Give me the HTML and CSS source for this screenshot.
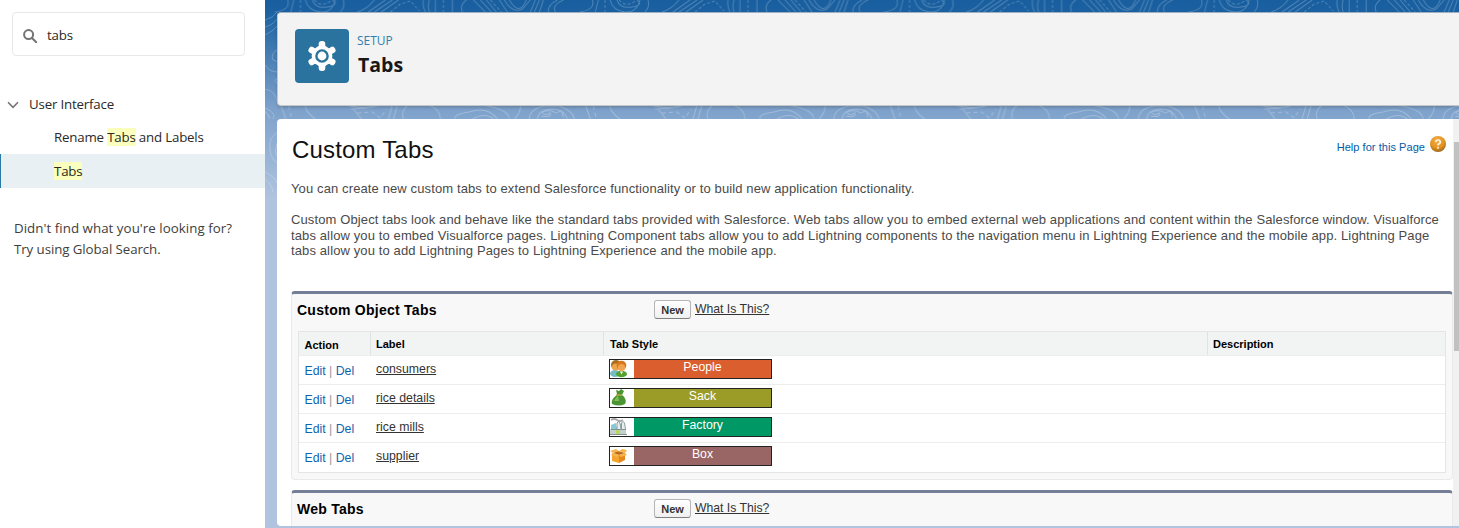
FILE: index.html
```html
<!DOCTYPE html>
<html lang="en">
<head>
<meta charset="utf-8">
<title>Tabs | Setup</title>
<link rel="stylesheet" href="styles.css">
</head>
<body>
<div class="app">
  <aside class="sidebar">
    <div class="search">
      <svg class="search-icon" viewBox="0 0 14 14"><circle cx="5.6" cy="5.6" r="4.5"/><path d="M9 9l4.2 4.2"/></svg>
      <span class="search-text">tabs</span>
    </div>
    <nav class="tree">
      <div class="node"><svg class="chevron" viewBox="0 0 12 8"><path d="M1.5 1.7l4.5 4.6 4.5-4.6"/></svg><span>User Interface</span></div>
      <div class="leaf"><span>Rename <mark>Tabs</mark> and Labels</span></div>
      <div class="leaf active"><span><mark>Tabs</mark></span></div>
    </nav>
    <p class="hint">Didn't find what you're looking for?<br><span class="hint-action">Try using Global Search.</span></p>
  </aside>
  <main class="main">
    <svg class="contours" width="1194" height="528">
      <defs>
        <pattern id="topo" x="335" y="0" width="304.6" height="528" patternUnits="userSpaceOnUse">
          <g fill="none" stroke="#fff" stroke-opacity=".22">
            <path d="M10 0Q13 11 25 12T40 0M17 0Q20 9 32 7T37 0M48 0Q50 7 45 12M62 12Q72 9 79 0M73 12L90 0M79 12L97 0M86 12L103 0M128 0Q127 7 130 12M134 0Q132 6 134 12M140 0V12M157 0V12M167 12Q164 5 171 0M178 0L190 12M185 0L196 12M191 0L201 12M204 0L212 12M209 0Q217 14 227 9L235 0M214 0Q224 17 231 0M240 0L235 12M244 0L239 12M248 0L244 12M253 12Q252 5 262 0M260 12Q256 5 268 0M284 12Q300 10 297 0M303 0L300 12"/>
            <path stroke-dasharray="3 2" d="M95 12L105 4L115 1L124 11M148 0V12M19 0Q26 8 35 1M195 0L206 12M5 0V12"/>
          </g>
          <g fill="none" stroke="#fff" stroke-opacity=".25">
            <path d="M10 105Q9 111 20 119M49 105Q70 110 85 105M55 109Q76 108 80 106M58 109L66 119M97 105L93 119M102 105L98 119M108 119Q105 111 113 105M133 105Q145 109 145 119M160 119Q158 114 174 112Q192 106 202 119M177 119Q190 112 198 119M184 105Q213 108 214 119M225 105Q226 112 219 119M234 119Q234 109 249 106H264Q278 111 279 119M242 119Q243 110 256 109Q269 109 272 119M246 116Q256 118 255 113L250 115L246 112Q257 109 260 113L266 111L268 117M290 105L295 119"/>
            <path stroke-dasharray="4 3" d="M62 113L77 112L85 118L91 109M298 106L301 119"/>
          </g>
        </pattern>
      </defs>
      <rect width="1194" height="119" fill="url(#topo)"/>
      <g fill="none" stroke="#fff" stroke-opacity=".22"><path d="M0 20Q8 18 12 12M0 27Q8 25 13 18M0 35Q9 31 13 25M0 65Q4 72 13 72M13 49Q5 54 8 60L13 62M0 89Q12 91 13 105M13 78Q7 80 13 84M0 108Q12 113 8 119M13 132Q3 138 5 149Q5 158 13 164M13 141Q8 152 13 158M0 172Q8 175 12 183M0 179Q7 184 8 192"/></g>
    </svg>
    <header class="page-header">
      <div class="gear-box">
        <svg viewBox="0 0 54 54">
          <g fill="#fff"><circle cx="27" cy="27" r="10.4"/><rect x="23.7" y="12" width="6.6" height="30" rx="3"/><rect x="23.7" y="12" width="6.6" height="30" rx="3" transform="rotate(60 27 27)"/><rect x="23.7" y="12" width="6.6" height="30" rx="3" transform="rotate(120 27 27)"/></g>
          <circle cx="27" cy="27" r="5.6" fill="#fff" stroke="#2a739e" stroke-width="2.4"/>
        </svg>
      </div>
      <div class="titles"><span class="setup">SETUP</span><h1>Tabs</h1></div>
    </header>
    <section class="content">
      <div class="scroll-body">
        <div class="title-row">
          <h2>Custom Tabs</h2>
          <a class="help">Help for this Page
            <svg viewBox="0 0 16 16"><defs><radialGradient id="orb" cx=".45" cy=".3" r=".75"><stop offset="0" stop-color="#f2b04e"/><stop offset=".6" stop-color="#e3921f"/><stop offset="1" stop-color="#8f601b"/></radialGradient></defs><circle cx="8" cy="8" r="8" fill="url(#orb)"/><path d="M5.7 6.2Q5.9 4 8 4T10.3 6Q10.3 7.1 9.1 7.8T8 9.5" fill="none" stroke="#fff3dc" stroke-width="1.7"/><circle cx="8" cy="11.7" r="1" fill="#fff3dc"/></svg>
          </a>
        </div>
        <p class="intro">You can create new custom tabs to extend Salesforce functionality or to build new application functionality.</p>
        <p class="intro second">Custom Object tabs look and behave like the standard tabs provided with Salesforce. Web tabs allow you to embed external web applications and content within the Salesforce window. Visualforce<br>tabs allow you to embed Visualforce pages. Lightning Component tabs allow you to add Lightning components to the navigation menu in Lightning Experience and the mobile app. Lightning Page<br>tabs allow you to add Lightning Pages to Lightning Experience and the mobile app.</p>
        <div class="block">
          <div class="block-head"><h3>Custom Object Tabs</h3><button class="new">New</button><a class="what">What Is This?</a></div>
          <div class="table">
            <div class="row head"><div class="action">Action</div><div>Label</div><div>Tab Style</div><div>Description</div></div>
            <div class="row"><div class="action"><a>Edit</a> | <a>Del</a></div><div><a class="name">consumers</a></div><div class="style-cell"><div class="swatch people"><svg viewBox="0 0 24 18"><ellipse cx="5" cy="13.5" rx="5" ry="3.5" fill="#72bdc5"/><circle cx="6" cy="5" r="5" fill="#a96d20"/><circle cx="5.5" cy="7" r="3.5" fill="#eca54a"/><ellipse cx="11.5" cy="14" rx="5.5" ry="3.2" fill="#57a22f"/><circle cx="11.5" cy="5.5" r="4.8" fill="#d9771c"/><circle cx="11.5" cy="7.5" r="3.6" fill="#f1a34e"/><path d="M10 11.5l1.5 3 1.5-3" fill="#fff"/></svg><span>People</span></div></div><div></div></div>
            <div class="row"><div class="action"><a>Edit</a> | <a>Del</a></div><div><a class="name">rice details</a></div><div class="style-cell"><div class="swatch sack"><svg viewBox="0 0 24 18"><path d="M7 5L6 1L9 2L11 0L14 2L12 6C15 8 17 12 15 15Q9 18 2 15C1 11 4 8 7 6Z" fill="#4b9632"/><path d="M4 12Q6 8 8 7L9 12Z" fill="#82bd59"/><path d="M6 6H12" stroke="#b5a94a" stroke-width="1.5"/></svg><span>Sack</span></div></div><div></div></div>
            <div class="row"><div class="action"><a>Edit</a> | <a>Del</a></div><div><a class="name">rice mills</a></div><div class="style-cell"><div class="swatch factory"><svg viewBox="0 0 24 18"><path d="M1 2Q4 0 7 2T13 2" fill="none" stroke="#aaa" stroke-width="1.8"/><path d="M1 7L6 5V9L11 6V11H16V14H1Z" fill="#88c9d5"/><path d="M7 11V5Q8 2 10 5L11 11M11.5 11V5Q13 2 14.5 5L15.5 11" fill="#e7eeee" stroke="#8d9a9e"/><path d="M0 11H16V17H0Z" fill="#c4cfd0"/><path d="M0 16.5H17M1 11.5H16" stroke="#879296"/><path d="M6 12h4v4H6z" fill="#b9d95c"/></svg><span>Factory</span></div></div><div></div></div>
            <div class="row"><div class="action"><a>Edit</a> | <a>Del</a></div><div><a class="name">supplier</a></div><div class="style-cell"><div class="swatch box"><svg viewBox="0 0 24 18"><path d="M2 6L9 8V16L2 14Z" fill="#f4a52f"/><path d="M9 8L15 6V13L9 16Z" fill="#e6861c"/><path d="M3 6L8 4L15 6L9 8Z" fill="#b86e1b"/><path d="M3 6L0 4L6 2L9 4ZM15 6L17 3L12 2L9 4ZM3 6L1 8L7 10L9 8ZM15 6L17 8L11 10L9 8Z" fill="#f8b44c"/></svg><span>Box</span></div></div><div></div></div>
          </div>
        </div>
        <div class="block next">
          <div class="block-head"><h3>Web Tabs</h3><button class="new">New</button><a class="what">What Is This?</a></div>
        </div>
      </div>
      <div class="scrollbar"><div class="thumb"></div></div>
    </section>
  </main>
</div>
</body>
</html>
```
FILE: styles.css
```css
* { box-sizing: border-box; }
body { margin: 0; background: #fff; font-family: "Liberation Sans", Arial, sans-serif; overflow: hidden; }
h1, h2, h3, p { margin: 0; }
.app { display: flex; width: 1459px; height: 528px; overflow: hidden; }

.sidebar { width: 265px; flex: none; background: #fff; padding-top: 12px; font-family: "Open Sans", "Noto Sans", sans-serif; font-size: 13.3px; color: #2b2826; white-space: nowrap; }
.search { display: flex; align-items: center; gap: 10px; width: 233px; height: 44px; margin-left: 12px; padding: 0 10px; border: 1px solid #e8e8e8; border-radius: 4px; }
.search-icon { width: 14px; height: 14px; fill: none; stroke: #747474; stroke-width: 2; margin-top: 4px; stroke-linecap: round; }
.search-text { line-height: 20px; margin-top: 1px; letter-spacing: -.15px; }
.tree { margin-top: 31px; letter-spacing: -.19px; }
.node { display: flex; align-items: center; height: 33px; padding-left: 7px; gap: 10px; }
.chevron { width: 12px; height: 8px; fill: none; stroke: #747474; stroke-width: 1.6; stroke-linecap: round; margin-top: 2px; }
.leaf { height: 34px; padding-left: 54px; line-height: 34px; }
.leaf.active { background: #e8f0f3; border-left: 1px solid #2a78a4; padding-left: 53px; }
mark { background: #faffbd; color: inherit; }
.hint { margin-top: 30px; padding-left: 14px; line-height: 21px; color: #3e3e3c; letter-spacing: .05px; }
.hint-action { letter-spacing: -.08px; }

.main { position: relative; flex: 1; min-width: 0; padding: 12px 0 2px 12px; display: flex; flex-direction: column; gap: 13px; background: linear-gradient(#195f9f 0, #1b61a1 12px, #7da1cb 108px, #b0c4df 200px, #b0c4df 100%); }
.contours { position: absolute; top: 0; left: 0; }
.page-header { position: relative; flex: none; height: 94px; padding: 16px 17px; display: flex; gap: 8px; background: #f3f3f3; border: 1px solid #c5c6c8; border-right: 0; border-radius: 4px 0 0 4px; border-top-color: #9fb0c2; box-shadow: 0 2px 3px rgba(0,0,0,.16); }
.gear-box { width: 54px; height: 54px; background: #2a739e; border-radius: 4px; }
.gear-box svg { display: block; }
.titles { display: flex; flex-direction: column; font-family: "Open Sans", "Noto Sans", sans-serif; }
.setup { font-size: 12px; line-height: 18px; margin-top: 3px; color: #2f7fb1; }
.titles h1 { font-size: 19.5px; line-height: 26px; margin-top: 2px; padding-left: 1px; color: #181818; }

.content { position: relative; flex: 1; min-height: 0; display: flex; background: #fff; border-radius: 4px 0 0 4px; overflow: hidden; }
.scroll-body { flex: 1; min-width: 0; padding: 16px 0 0 14px; }
.scrollbar { width: 6px; background: #f1f1f1; padding-top: 23px; }
.thumb { height: 209px; margin-left: 1px; background: #c1c1c1; }
.title-row { display: flex; justify-content: space-between; height: 30px; }
h2 { font-size: 24px; font-weight: 400; line-height: 30px; padding-left: 1px; letter-spacing: .18px; color: #111; }
.help { display: flex; gap: 5px; font-size: 11px; line-height: 24px; letter-spacing: .05px; color: #015ba7; padding-right: 7px; white-space: nowrap; }
.help svg { width: 16px; height: 16px; margin-top: 1px; }
.intro { font-size: 13px; line-height: 15.8px; margin-top: 16px; letter-spacing: .118px; color: #4a4a4a; white-space: nowrap; }
.intro.second { margin-top: 15px; }

.block { height: 189px; margin-top: 32px; padding: 0 6px; background: #f8f8f8; border: 1px solid #eaeaea; border-top: 3px solid #747e96; border-radius: 4px; }
.block.next { margin-top: 10px; }
.block-head { display: flex; align-items: center; height: 37px; padding-bottom: 6px; }
h3 { width: 357px; font-size: 14px; letter-spacing: .26px; color: #000; margin-left: -1px; }
.new { width: 37px; height: 19px; margin-right: 4px; padding: 0; border: 1px solid #b5b5b5; border-bottom-color: #7f7f7f; border-radius: 3px; background: linear-gradient(#fff, #f0f0f0); font: bold 11px "Liberation Sans", sans-serif; color: #333; }
.what { margin-top: -2px; font-size: 12.2px; color: #333; text-decoration: underline; }
.table { border: 1px solid #e4e6e6; background: #fff; }
.row { display: grid; grid-template-columns: 71px 233px 604px 1fr; height: 29px; border-bottom: 1px solid #ededed; font-size: 12.3px; }
.row:last-child { border-bottom: 0; }
.row > div { padding: 6px 0 0 6px; line-height: 14px; white-space: nowrap; }
.row > .action { padding: 8px 0 0 5.5px; color: #999; }
.action a { color: #0f65b0; }
.row.head { height: 24px; background: #f2f3f3; font-size: 11px; font-weight: bold; color: #000; }
.row.head > div { padding-top: 5px; border-left: 1px solid #e0e3e5; padding-left: 5px; }
.row.head > div:nth-child(3) { padding-left: 6px; }
.row.head > .action { padding: 6px 0 0 5.5px; border-left: 0; color: #000; }
.name { color: #333; text-decoration: underline; }
.row > .style-cell { padding: 3px 0 0 6px; }
.swatch { display: flex; width: 163px; height: 20px; border: 1px solid #222; color: #fff; }
.swatch svg { width: 24px; height: 18px; background: #fff; flex: none; }
.swatch span { flex: 1; text-align: center; line-height: 14px; }
.people { background: #db5e2f; }
.sack { background: #9a9c27; }
.factory { background: #009965; }
.box { background: #996565; }
```
